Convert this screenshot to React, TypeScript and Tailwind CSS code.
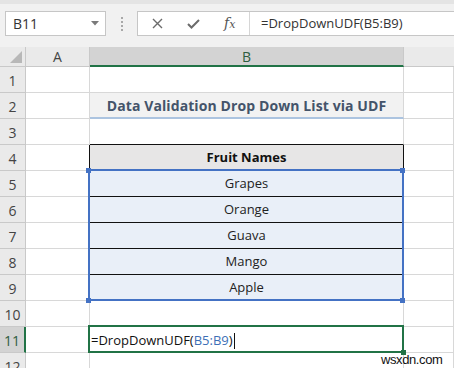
import React from "react";

const cellFont = { fontFamily: '"Open Sans", "Noto Sans", sans-serif' };

function RowHead({ n, selected }: { n: number; selected?: boolean }) {
  return (
    <div
      className={
        "h-[26px] box-border border-b border-[#c9c9c9] flex items-end justify-center pb-[1px] text-[14px] " +
        (selected
          ? "bg-[#d3d3d3] border-r-2 border-r-[#217346] text-[#2e5d3f]"
          : "bg-[#eaeaea] border-r border-r-[#c9c9c9] text-[#444]")
      }
      style={cellFont}
    >
      {n}
    </div>
  );
}

function Cell({ className = "", children }: { className?: string; children?: React.ReactNode }) {
  return (
    <div
      className={"h-[26px] box-border border-b border-r border-[#d8d8d8] flex items-center " + className}
      style={cellFont}
    >
      {children}
    </div>
  );
}

export default function App() {
  const fruits = ["Grapes", "Orange", "Guava", "Mango", "Apple"];
  return (
    <div className="relative w-[454px] h-[368px] overflow-hidden bg-white">
      {/* Toolbar */}
      <div className="h-[47px] box-border bg-[#f1f1f1] border-t-[4px] border-[#e4e4e4] flex items-start pt-[7px] pl-[5px]">
        <div className="w-[101px] h-[25px] box-border bg-white border border-[#c6c6c6] flex items-center pl-[7px] pr-[6px]">
          <span className="text-[14px] text-[#333] flex-1" style={{ fontFamily: '"Open Sans", sans-serif' }}>
            B11
          </span>
          <svg width="8" height="5" viewBox="0 0 8 5">
            <path d="M0 0 H8 L4 4.5 Z" fill="#7a7a7a" />
          </svg>
        </div>
        <div className="ml-[15px] mt-[6px] w-[3px] flex flex-col gap-[2px]">
          <div className="w-[2px] h-[2px] bg-[#a8a8a8]" />
          <div className="w-[2px] h-[2px] bg-[#a8a8a8]" />
          <div className="w-[2px] h-[2px] bg-[#a8a8a8]" />
          <div className="w-[2px] h-[2px] bg-[#a8a8a8]" />
        </div>
        <div className="ml-[13px] h-[25px] flex-1 box-border bg-white border border-[#c6c6c6] border-r-0 flex items-center">
          <div className="w-[111px] h-full flex items-center">
            <svg className="ml-[14px]" width="11" height="11" viewBox="0 0 11 11">
              <path d="M1 1 L10 10 M10 1 L1 10" stroke="#6b6b6b" strokeWidth="1.4" fill="none" />
            </svg>
            <svg className="ml-[24px]" width="13" height="10" viewBox="0 0 13 10">
              <path d="M1 5 L4.5 8.5 L12 1" stroke="#6b6b6b" strokeWidth="2" fill="none" />
            </svg>
            <span
              className="ml-[24px] text-[14px] italic text-[#555]"
              style={{ fontFamily: '"DejaVu Serif", serif' }}
            >
              f<span className="text-[11px]">x</span>
            </span>
          </div>
          <div className="h-full w-[1px] bg-[#d6d6d6]" />
          <span className="ml-[11px] text-[13px] text-[#333]" style={{ fontFamily: '"Open Sans", sans-serif' }}>
            =DropDownUDF(B5:B9)
          </span>
        </div>
      </div>

      {/* Grid */}
      <div className="grid grid-cols-[26px_64px_314px_1fr]">
        {/* column header */}
        <div className="h-[20px] box-border bg-[#eaeaea] border-b border-r border-[#c9c9c9] relative">
          <svg className="absolute right-[3px] bottom-[3px]" width="12" height="12" viewBox="0 0 12 12">
            <path d="M12 0 V12 H0 Z" fill="#b8b8b8" />
          </svg>
        </div>
        <div
          className="h-[20px] box-border bg-[#eaeaea] border-b border-r border-[#c9c9c9] flex items-center justify-center text-[14px] text-[#444]"
          style={cellFont}
        >
          A
        </div>
        <div
          className="h-[20px] box-border bg-[#d3d3d3] border-b-2 border-b-[#217346] border-r border-r-[#c9c9c9] flex items-center justify-center pt-[1px] text-[14px] text-[#2e5d3f]"
          style={cellFont}
        >
          B
        </div>
        <div className="h-[20px] box-border bg-[#eaeaea] border-b border-[#c9c9c9]" />

        {/* row 1 */}
        <RowHead n={1} />
        <Cell />
        <Cell />
        <Cell />

        {/* row 2 */}
        <RowHead n={2} />
        <Cell />
        <Cell className="bg-[#f2f2f2] border-b-2 border-b-[#acc4e0] justify-center font-bold text-[14px] tracking-[0.1px] text-[#44546a]">
          Data Validation Drop Down List via UDF
        </Cell>
        <Cell />

        {/* row 3 */}
        <RowHead n={3} />
        <Cell />
        <Cell className="border-b-[#111]" />
        <Cell />

        {/* row 4 */}
        <RowHead n={4} />
        <Cell className="border-r-[#111]" />
        <Cell className="bg-[#e7e6e6] border-r-[#111] border-b-[#111] justify-center font-bold text-[13px] text-[#111]">
          Fruit Names
        </Cell>
        <Cell />

        {fruits.map((f, i) => (
          <React.Fragment key={f}>
            <RowHead n={5 + i} />
            <Cell />
            <Cell
              className={
                "bg-[#e9eff8] justify-center text-[13px] text-[#222] " +
                (i < 4 ? "border-b-[#111]" : "")
              }
            >
              {f}
            </Cell>
            <Cell />
          </React.Fragment>
        ))}

        {/* row 10 */}
        <RowHead n={10} />
        <Cell />
        <Cell />
        <Cell />

        {/* row 11 */}
        <RowHead n={11} selected />
        <Cell />
        <Cell className="text-[13px] text-[#111] pl-[1px] pt-[3px]">
          =DropDownUDF(<span className="text-[#3d6fb6]">B5:B9</span>)
          <span className="ml-[1px] w-[1px] h-[16px] bg-[#111]" />
        </Cell>
        <Cell />

        {/* row 12 */}
        <RowHead n={12} />
        <Cell />
        <Cell />
        <Cell />
      </div>

      {/* selection overlay B5:B9 */}
      <div className="absolute left-[88px] top-[169px] w-[316px] h-[132px] border-2 border-[#4472c4]" />
      <div className="absolute left-[86px] top-[168px] w-[5px] h-[5px] bg-[#4472c4]" />
      <div className="absolute left-[400px] top-[168px] w-[5px] h-[5px] bg-[#4472c4]" />
      <div className="absolute left-[86px] top-[298px] w-[5px] h-[5px] bg-[#4472c4]" />
      <div className="absolute left-[400px] top-[298px] w-[5px] h-[5px] bg-[#4472c4]" />

      {/* active cell B11 */}
      <div className="absolute left-[88px] top-[325px] w-[316px] h-[28px] border-2 border-[#217346]" />
      <div className="absolute left-[401px] top-[350px] w-[5px] h-[5px] bg-[#217346]" />

      {/* watermark */}
      <div
        className="absolute left-[381px] top-[350px] text-[13px] tracking-[-0.4px] text-[#111]"
        style={{ fontFamily: '"Liberation Sans", Arial, sans-serif' }}
      >
        wsxdn.com
      </div>
    </div>
  );
}
